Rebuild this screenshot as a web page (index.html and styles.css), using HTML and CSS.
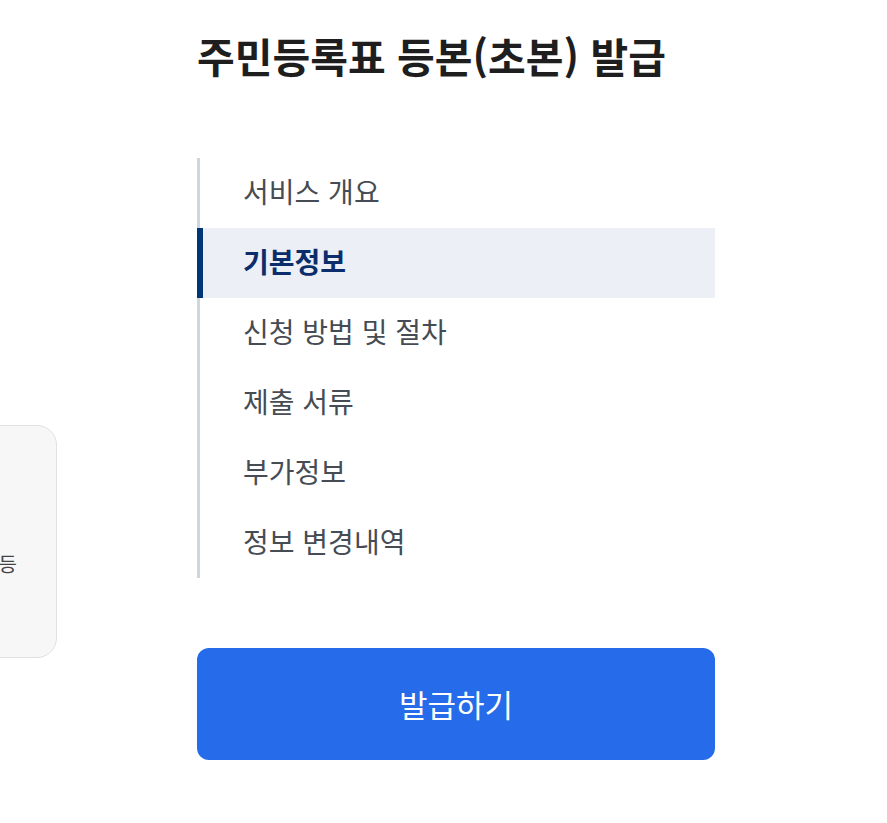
FILE: index.html
```html
<!DOCTYPE html>
<html lang="ko">
<head>
<meta charset="utf-8">
<link rel="stylesheet" href="styles.css">
</head>
<body>
<div class="page">
  <aside class="side">
    <div class="card"><p class="card-text">주민등록번호, 성명, 주소 등</p></div>
  </aside>
  <main class="main">
    <h1 class="title">주민등록표 등본(초본) 발급</h1>
    <nav class="toc">
      <a class="toc-item">서비스 개요</a>
      <a class="toc-item active">기본정보</a>
      <a class="toc-item">신청 방법 및 절차</a>
      <a class="toc-item">제출 서류</a>
      <a class="toc-item">부가정보</a>
      <a class="toc-item">정보 변경내역</a>
    </nav>
    <button class="btn">발급하기</button>
  </main>
</div>
</body>
</html>
```
FILE: styles.css
```css
* { box-sizing: border-box; }
html, body { margin: 0; padding: 0; background: #fff; }
body {
  font-family: "Noto Sans CJK KR", "Noto Sans", sans-serif;
  width: 887px; height: 823px; overflow: hidden;
}
.page {
  display: flex;
  align-items: flex-start;
}
.side {
  width: 197px;
  flex: none;
  display: flex;
  justify-content: flex-end;
  padding-top: 425px;
}
.card {
  width: 400px;
  flex: none;
  margin-right: 140px;
  height: 233px;
  background: #f7f7f7;
  border: 1px solid #e1e1e1;
  border-radius: 20px;
  display: flex;
  align-items: flex-start;
  justify-content: flex-end;
  padding: 122px 39px 0 0;
}
.card-text {
  margin: 0;
  font-size: 20px;
  line-height: 32px;
  color: #444;
  white-space: nowrap;
}
.main {
  width: 518px;
  flex: none;
}
.title {
  margin: 25px 0 0;
  font-size: 41px;
  font-weight: 700;
  color: #1e1e1e;
  line-height: 60px;
}
.toc {
  margin-top: 73px;
  border-left: 3px solid #cdd6e1;
  display: flex;
  flex-direction: column;
}
.toc-item {
  height: 70px;
  display: flex;
  align-items: center;
  padding-left: 43px;
  padding-bottom: 4px;
  font-size: 28px;
  color: #464c53;
}
.toc-item.active {
  margin-left: -3px;
  border-left: 6px solid #003675;
  padding-left: 40px;
  background: #eceff5;
  color: #0b2d6b;
  font-weight: 700;
}
.btn {
  display: block;
  width: 518px;
  height: 112px;
  margin-top: 70px;
  border: 0;
  border-radius: 12px;
  background: #256bea;
  color: #fff;
  font-family: inherit;
  font-size: 31px;
  font-weight: 400;
  padding: 0 0 2px;
}
```
